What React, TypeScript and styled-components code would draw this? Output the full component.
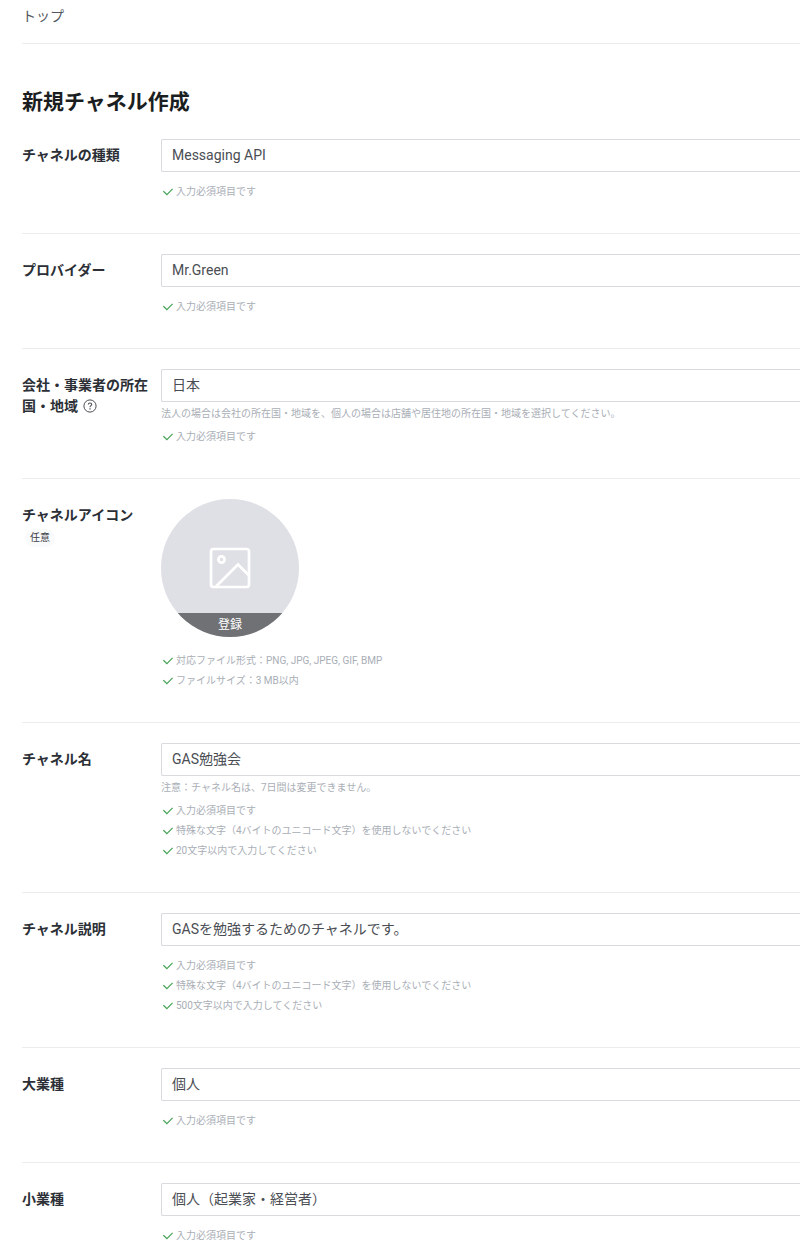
import React from "react";
import styled, { createGlobalStyle } from "styled-components";

const GlobalStyle = createGlobalStyle`
  *, *::before, *::after { box-sizing: border-box; }
  body {
    margin: 0;
    background: #fff;
    color: #2c3036;
    font-family: Roboto, "Noto Sans CJK JP", sans-serif;
    font-size: 14px;
    line-height: 21px;
  }
`;

const Page = styled.div`
  padding: 0 0 6px 22px;
`;

const Breadcrumb = styled.nav`
  padding: 6px 0 16px;
  border-bottom: 1px solid #ebecee;
`;

const BreadcrumbLink = styled.a`
  color: #54585e;
  text-decoration: none;
`;

const Title = styled.h1`
  margin: 42px 0 21px;
  color: #1b1e21;
  font-size: 21px;
  font-weight: 700;
  line-height: 32px;
`;

const Row = styled.section`
  display: grid;
  grid-template-columns: 128px minmax(0, 1fr);
  column-gap: 11px;
  padding: 20px 0 31px;
  border-bottom: 1px solid #ebecee;

  &:first-of-type { padding-top: 0; }
  &:last-of-type { padding-bottom: 0; border-bottom: 0; }
`;

const LabelCell = styled.div`
  padding-top: 6px;
`;

const Label = styled.label`
  font-weight: 700;
`;

const HelpButton = styled.button`
  margin: 0 0 0 5px;
  padding: 0;
  border: 0;
  background: none;
  color: #4a4e54;
  line-height: 0;
  vertical-align: -2px;
`;

const Badge = styled.span`
  display: block;
  width: max-content;
  margin: 3px 0 0 3px;
  padding: 0 5px;
  border-radius: 9px;
  background: #f9fafb;
  color: #3c4046;
  font-size: 10px;
  line-height: 18px;
`;

const Field = styled.input`
  display: block;
  appearance: none;
  width: 100%;
  height: 33px;
  margin: 0;
  padding: 0 10px;
  border: 1px solid #d8dadd;
  border-right: 0;
  border-radius: 2px 0 0 2px;
  outline: 0;
  background: #fff;
  color: #4a4e54;
  font: inherit;

  &[type="text"] { padding-bottom: 3px; }
`;

const Note = styled.p`
  margin: 2px 0 0;
  color: #a9aeb6;
  font-size: 10px;
  line-height: 20px;
`;

const Checks = styled.ul<{ $gap: number }>`
  margin: ${(p) => p.$gap}px 0 0;
  padding: 0;
  list-style: none;
`;

const Check = styled.li`
  display: flex;
  align-items: center;
  gap: 3px;
  padding-left: 2px;
  color: #a9aeb6;
  font-size: 10px;
  line-height: 20px;
`;

const Upload = styled.button`
  display: grid;
  grid-template-rows: 1fr 24px;
  width: 138px;
  height: 138px;
  padding: 0;
  overflow: hidden;
  border: 0;
  border-radius: 50%;
  background: #dfe0e5;
  color: #fff;
  font: inherit;
`;

const UploadPicture = styled.span`
  display: grid;
  place-items: end center;
  padding-bottom: 24px;
`;

const UploadCaption = styled.span`
  background: #707174;
  font-size: 12px;
  line-height: 24px;
`;

function CheckIcon() {
  return (
    <svg width="10" height="10" viewBox="0 0 10 10" fill="none" aria-hidden="true">
      <path d="M0.4 4.2 3.9 7.6 9.6 1.9" stroke="#45a355" strokeWidth="1.2" />
    </svg>
  );
}

function HelpIcon() {
  return (
    <svg width="14" height="14" viewBox="0 0 14 14" fill="none" stroke="currentColor" aria-hidden="true">
      <circle cx="7" cy="7" r="6.1" strokeWidth="1" />
      <path d="M5.3 5.6C5.3 4.6 6 4 7 4s1.7.6 1.7 1.5C8.7 6.6 7 6.7 7 8.2" strokeWidth="1.1" />
      <path d="M7 9.3v1.2" strokeWidth="1.2" />
    </svg>
  );
}

function ImageIcon() {
  return (
    <svg width="42" height="42" viewBox="0 0 42 42" fill="none" stroke="#fff" strokeWidth="2.7" aria-hidden="true">
      <rect x="2" y="2" width="38" height="38" rx="2.5" />
      <circle cx="12.5" cy="12.5" r="3.1" />
      <path d="M7 39.5 29 17.5 40 28.5" />
    </svg>
  );
}

const REQUIRED = "入力必須項目です";
const NO_SPECIAL = "特殊な文字（4バイトのユニコード文字）を使用しないでください";

type RowData = {
  id: string;
  label: string;
  value?: string;
  kind: "select" | "text" | "icon";
  help?: boolean;
  optional?: boolean;
  note?: string;
  checks: string[];
};

const rows: RowData[] = [
  { id: "type", label: "チャネルの種類", value: "Messaging API", kind: "select", checks: [REQUIRED] },
  { id: "provider", label: "プロバイダー", value: "Mr.Green", kind: "select", checks: [REQUIRED] },
  {
    id: "region",
    label: "会社・事業者の所在国・地域",
    value: "日本",
    kind: "select",
    help: true,
    note: "法人の場合は会社の所在国・地域を、個人の場合は店舗や居住地の所在国・地域を選択してください。",
    checks: [REQUIRED],
  },
  {
    id: "icon",
    label: "チャネルアイコン",
    kind: "icon",
    optional: true,
    checks: ["対応ファイル形式：PNG, JPG, JPEG, GIF, BMP", "ファイルサイズ：3 MB以内"],
  },
  {
    id: "name",
    label: "チャネル名",
    value: "GAS勉強会",
    kind: "text",
    note: "注意：チャネル名は、7日間は変更できません。",
    checks: [REQUIRED, NO_SPECIAL, "20文字以内で入力してください"],
  },
  {
    id: "description",
    label: "チャネル説明",
    value: "GASを勉強するためのチャネルです。",
    kind: "text",
    checks: [REQUIRED, NO_SPECIAL, "500文字以内で入力してください"],
  },
  { id: "category", label: "大業種", value: "個人", kind: "select", checks: [REQUIRED] },
  { id: "subcategory", label: "小業種", value: "個人（起業家・経営者）", kind: "select", checks: [REQUIRED] },
];

function Control({ row }: { row: RowData }) {
  if (row.kind === "icon") {
    return (
      <Upload id={row.id} type="button">
        <UploadPicture>
          <ImageIcon />
        </UploadPicture>
        <UploadCaption>登録</UploadCaption>
      </Upload>
    );
  }
  if (row.kind === "select") {
    return (
      <Field as="select" id={row.id} defaultValue={row.value}>
        <option>{row.value}</option>
      </Field>
    );
  }
  return <Field id={row.id} type="text" defaultValue={row.value} />;
}

function checksGap(row: RowData) {
  if (row.kind === "icon") return 14;
  return row.note ? 3 : 10;
}

export default function App() {
  return (
    <Page lang="ja">
      <GlobalStyle />
      <Breadcrumb>
        <BreadcrumbLink href="#top">トップ</BreadcrumbLink>
      </Breadcrumb>
      <main>
        <Title>新規チャネル作成</Title>
        <form>
          {rows.map((row) => (
            <Row key={row.id}>
              <LabelCell>
                <Label htmlFor={row.id}>{row.label}</Label>
                {row.help && (
                  <HelpButton type="button" aria-label="ヘルプ">
                    <HelpIcon />
                  </HelpButton>
                )}
                {row.optional && <Badge>任意</Badge>}
              </LabelCell>
              <div>
                <Control row={row} />
                {row.note && <Note>{row.note}</Note>}
                <Checks $gap={checksGap(row)}>
                  {row.checks.map((text) => (
                    <Check key={text}>
                      <CheckIcon />
                      {text}
                    </Check>
                  ))}
                </Checks>
              </div>
            </Row>
          ))}
        </form>
      </main>
    </Page>
  );
}
